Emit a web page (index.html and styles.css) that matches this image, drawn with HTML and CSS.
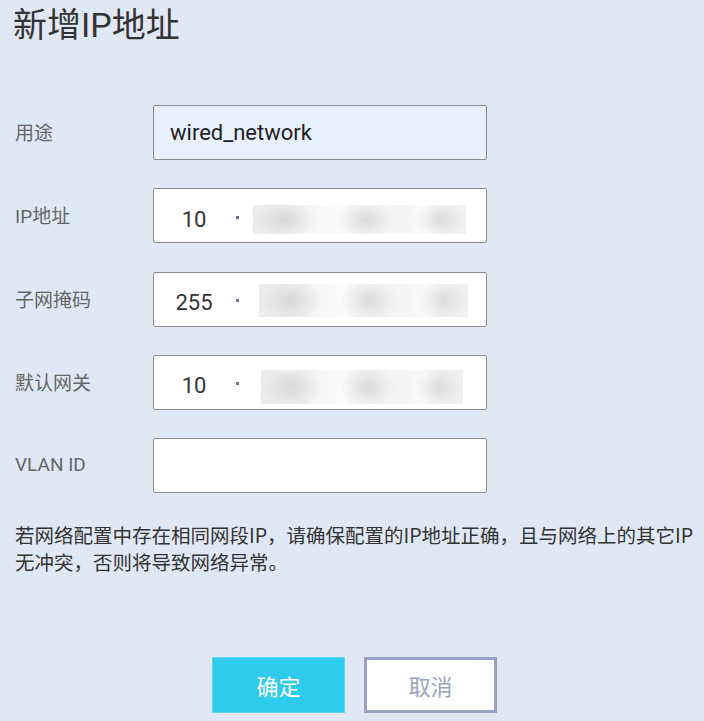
FILE: index.html
```html
<!DOCTYPE html>
<html lang="zh-CN">
<head>
<meta charset="utf-8">
<title>新增IP地址</title>
<link rel="stylesheet" href="styles.css">
</head>
<body>
<div class="dialog">
  <h1 class="title">新增IP地址</h1>
  <div class="form">
    <div class="row">
      <label class="label">用途</label>
      <div class="field filled"><span class="text">wired_network</span></div>
    </div>
    <div class="row">
      <label class="label">IP地址</label>
      <div class="field ip"><span class="oct">10</span><span class="dot"></span><span class="blur b1"></span></div>
    </div>
    <div class="row">
      <label class="label">子网掩码</label>
      <div class="field ip"><span class="oct">255</span><span class="dot"></span><span class="blur b2"></span></div>
    </div>
    <div class="row">
      <label class="label">默认网关</label>
      <div class="field ip"><span class="oct">10</span><span class="dot"></span><span class="blur b3"></span></div>
    </div>
    <div class="row">
      <label class="label">VLAN ID</label>
      <div class="field"></div>
    </div>
  </div>
  <p class="note">若网络配置中存在相同网段IP，请确保配置的IP地址正确，且与网络上的其它IP无冲突，否则将导致网络异常。</p>
  <div class="actions">
    <button class="btn primary">确定</button>
    <button class="btn secondary">取消</button>
  </div>
</div>
</body>
</html>
```
FILE: styles.css
```css
html, body {
  margin: 0;
  padding: 0;
  background: #e1e8f5;
}
body {
  font-family: Roboto, "Noto Sans CJK SC", sans-serif;
  width: 704px;
  height: 721px;
  overflow: hidden;
}
.dialog {
  padding: 0 0 0 15px;
}
.title {
  margin: 0 0 0 -2px;
  padding: 4px 0 0 0;
  font-size: 34px;
  font-weight: 400;
  line-height: 42px;
  color: #333;
}
.form {
  display: flex;
  flex-direction: column;
  gap: 28.25px;
  margin-top: 59px;
}
.row {
  display: grid;
  grid-template-columns: 138px 334px;
  align-items: center;
  height: 55px;
}
.label {
  font-size: 19px;
  color: #666;
  margin-top: -2px;
}
.field {
  box-sizing: border-box;
  height: 55px;
  border: 1px solid #8c8c8c;
  border-radius: 2px;
  background: #fff;
  display: flex;
  align-items: center;
}
.field.filled {
  background: #e8f0fd;
}
.text {
  font-size: 22px;
  color: #222;
  padding-left: 16px;
}
.oct {
  font-size: 22px;
  color: #333;
  width: 80px;
  text-align: center;
  margin-top: 7px;
}
.dot {
  width: 3px;
  height: 3px;
  background: #6a7390;
  margin-left: 2px;
  margin-top: 3px;
}
.blur {
  align-self: flex-start;
  display: block;
  background:
    radial-gradient(closest-side, #d9d9d9, rgba(245,245,245,0)) 0% 50% / 30% 140% no-repeat,
    radial-gradient(closest-side, #dbdbdb, rgba(245,245,245,0)) 54% 50% / 28% 140% no-repeat,
    radial-gradient(closest-side, #dcdcdc, rgba(245,245,245,0)) 100% 50% / 24% 140% no-repeat,
    linear-gradient(90deg, #ececec 0%, #f7f7f7 30%, #fbfbfb 40%, #f4f4f4 70%, #fcfcfc 82%, #efefef 100%);
}
.b1 { width: 213px; height: 29px; margin-left: 14px; margin-top: 16px; }
.b2 { width: 209px; height: 33px; margin-left: 20px; margin-top: 11px; }
.b3 { width: 202px; height: 34px; margin-left: 22px; margin-top: 14px; }
.note {
  margin: 28px 0 0 0;
  font-size: 19.5px;
  line-height: 27px;
  color: #333;
  font-family: "Noto Sans CJK SC", sans-serif;
  width: 688px;
}
.actions {
  display: flex;
  gap: 19px;
  margin-top: 82px;
  padding-left: 197px;
}
.btn {
  box-sizing: border-box;
  width: 133px;
  height: 56px;
  font-family: "Noto Sans CJK SC", sans-serif;
  font-size: 22px;
  padding: 0;
  margin: 0;
}
.primary {
  background: #2ecbec;
  border: 1px solid #61d8f1;
  color: #fff;
}
.secondary {
  background: #fff;
  border: 3px solid #97a3c2;
  color: #9aa5c0;
}
```
